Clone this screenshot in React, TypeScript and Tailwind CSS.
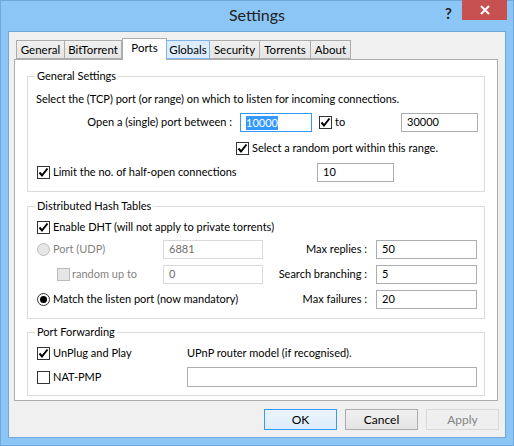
function Check({ checked, disabled }: { checked?: boolean; disabled?: boolean }) {
  return (
    <span
      className={
        "flex items-center justify-center w-[13px] h-[13px] shrink-0 border " +
        (disabled ? "border-[#bcbcbc] bg-[#e6e6e6]" : "border-[#333333] bg-white")
      }
    >
      {checked && (
        <svg width="11" height="11" viewBox="0 0 11 11">
          <path d="M1.5 5.5 L4 8.5 L9.5 1.5" fill="none" stroke="#000" strokeWidth="2" />
        </svg>
      )}
    </span>
  );
}

function Radio({ checked, disabled }: { checked?: boolean; disabled?: boolean }) {
  return (
    <span
      className={
        "flex items-center justify-center w-[13px] h-[13px] shrink-0 rounded-full border " +
        (disabled ? "border-[#bcbcbc] bg-[#e6e6e6]" : "border-[#333333] bg-white")
      }
    >
      {checked && <span className="w-[7px] h-[7px] rounded-full bg-black" />}
    </span>
  );
}

function Field({ value, w, disabled, focused }: { value: string; w: string; disabled?: boolean; focused?: boolean }) {
  return (
    <div
      className={
        "h-[19px] shrink-0 flex items-center px-[5px] bg-white border " +
        w +
        (focused ? " border-[#3399ff]" : disabled ? " border-[#d9d9d9] text-[#6d6d6d]" : " border-[#abadb3]")
      }
    >
      {focused ? <span className="bg-[#3399ff] text-white leading-[14px]">{value}</span> : value}
    </div>
  );
}

function Group({ title, children, className }: { title: string; children: React.ReactNode; className?: string }) {
  return (
    <fieldset className={"border border-[#dcdcdc] mx-[12px] " + (className ?? "")}>
      <legend className="ml-[7px] px-[2px] leading-[14px]">{title}</legend>
      {children}
    </fieldset>
  );
}

const tabs = [
  { name: "General", w: "w-[49px]" },
  { name: "BitTorrent", w: "w-[58px]" },
  { name: "Ports", w: "w-[45px]" },
  { name: "Globals", w: "w-[44px]" },
  { name: "Security", w: "w-[51px]" },
  { name: "Torrents", w: "w-[52px]" },
  { name: "About", w: "w-[41px]" },
];

export default function App() {
  return (
    <div className="w-[514px] h-[446px] bg-[#8bc6f6] border border-[#6fa8dc] flex flex-col font-['Lato',sans-serif] text-[11px] text-black">
      <div className="h-[30px] shrink-0 flex items-center relative">
        <div className="flex-1 text-center text-[16px] text-[#222] pb-[2px]">Settings</div>
        <span className="absolute left-[444px] top-[1px] text-[15px] font-bold text-[#222]">?</span>
        <div className="absolute right-[6px] top-[-1px] w-[45px] h-[20px] bg-[#c75050] flex items-center justify-center">
          <svg width="10" height="10" viewBox="0 0 10 10">
            <path d="M1 1 L9 9 M9 1 L1 9" stroke="#fff" strokeWidth="2" />
          </svg>
        </div>
      </div>

      <div className="flex-1 mx-[7px] mb-[7px] bg-[#f0f0f0] border border-[#6fa8dc] flex flex-col">
        <div className="flex items-end h-[27px] pl-[7px] text-[11.5px]">
          {tabs.map((t) =>
            t.name === "Ports" ? (
              <div
                key={t.name}
                className={t.w + " h-[22px] -mb-[1px] bg-white border border-[#acacac] border-b-0 text-center leading-[17px] relative z-10"}
              >
                {t.name}
              </div>
            ) : (
              <div
                key={t.name}
                className={
                  t.w +
                  " h-[19px] text-center leading-[18px] border -ml-[1px] first:ml-0 " +
                  (t.name === "Globals"
                    ? "bg-[#dcecfc] border-[#7eb4ea] relative z-10"
                    : "bg-gradient-to-b from-[#f0f0f0] to-[#e5e5e5] border-[#acacac]")
                }
              >
                {t.name}
              </div>
            )
          )}
        </div>

        <div className="ml-[5px] mr-[7px] h-[342px] bg-white border border-[#acacac] pt-[9px] flex flex-col">
          <Group title="General Settings" className="pb-[9px]">
            <div className="h-[16px] mt-[8px] pl-[8px] flex items-center">
              Select the (TCP) port (or range) on which to listen for incoming connections.
            </div>
            <div className="h-[19px] mt-[6px] flex items-center">
              <div className="w-[204px] text-right">Open a (single) port between :</div>
              <div className="ml-[8px]">
                <Field value="10000" w="w-[72px]" focused />
              </div>
              <div className="ml-[7px]">
                <Check checked />
              </div>
              <span className="ml-[3px] w-[66px]">to</span>
              <Field value="30000" w="w-[77px]" />
            </div>
            <div className="h-[14px] mt-[9px] pl-[208px] flex items-center gap-[3px]">
              <Check checked />
              <span>Select a random port within this range.</span>
            </div>
            <div className="h-[19px] mt-[8px] pl-[9px] flex items-center">
              <div className="w-[280px] flex items-center gap-[3px]">
                <Check checked />
                <span>Limit the no. of half-open connections</span>
              </div>
              <Field value="10" w="w-[77px]" />
            </div>
          </Group>

          <Group title="Distributed Hash Tables" className="mt-[7px] pb-[9px]">
            <div className="h-[14px] mt-[7px] pl-[9px] flex items-center gap-[3px]">
              <Check checked />
              <span>Enable DHT (will not apply to private torrents)</span>
            </div>
            <div className="h-[19px] mt-[6px] flex items-center">
              <div className="w-[135px] pl-[9px] flex items-center gap-[3px] text-[#838383]">
                <Radio disabled />
                <span>Port (UDP)</span>
              </div>
              <Field value="6881" w="w-[100px]" disabled />
              <div className="w-[104px] text-right">Max replies :</div>
              <div className="ml-[9px]">
                <Field value="50" w="w-[101px]" />
              </div>
            </div>
            <div className="h-[19px] mt-[6px] flex items-center">
              <div className="w-[135px] pl-[29px] flex items-center gap-[2px] text-[#838383]">
                <Check disabled />
                <span>random up to</span>
              </div>
              <Field value="0" w="w-[100px]" disabled />
              <div className="w-[104px] text-right">Search branching :</div>
              <div className="ml-[9px]">
                <Field value="5" w="w-[101px]" />
              </div>
            </div>
            <div className="h-[19px] mt-[6px] flex items-center">
              <div className="w-[235px] pl-[9px] flex items-center gap-[3px]">
                <Radio checked />
                <span>Match the listen port (now mandatory)</span>
              </div>
              <div className="w-[104px] text-right">Max failures :</div>
              <div className="ml-[9px]">
                <Field value="20" w="w-[101px]" />
              </div>
            </div>
          </Group>

          <Group title="Port Forwarding" className="mt-[6px] pb-[8px]">
            <div className="h-[14px] mt-[7px] flex items-center">
              <div className="w-[159px] pl-[9px] flex items-center gap-[3px]">
                <Check checked />
                <span>UnPlug and Play</span>
              </div>
              <span>UPnP router model (if recognised).</span>
            </div>
            <div className="h-[20px] mt-[7px] flex items-center">
              <div className="w-[159px] pl-[9px] flex items-center gap-[3px]">
                <Check />
                <span>NAT-PMP</span>
              </div>
              <Field value="" w="w-[290px] h-[20px]" />
            </div>
          </Group>
        </div>

        <div className="flex justify-end gap-[8px] mt-[8px] pr-[6px]">
          <button className="w-[73px] h-[21px] border border-[#3399ff] bg-gradient-to-b from-[#ecf4fc] to-[#dcecfc] text-[12px]">OK</button>
          <button className="w-[73px] h-[21px] border border-[#acacac] bg-gradient-to-b from-[#f0f0f0] to-[#e5e5e5] text-[12px]">Cancel</button>
          <button className="w-[73px] h-[21px] border border-[#d9d9d9] bg-[#efefef] text-[#838383] text-[12px]">Apply</button>
        </div>
      </div>
    </div>
  );
}
